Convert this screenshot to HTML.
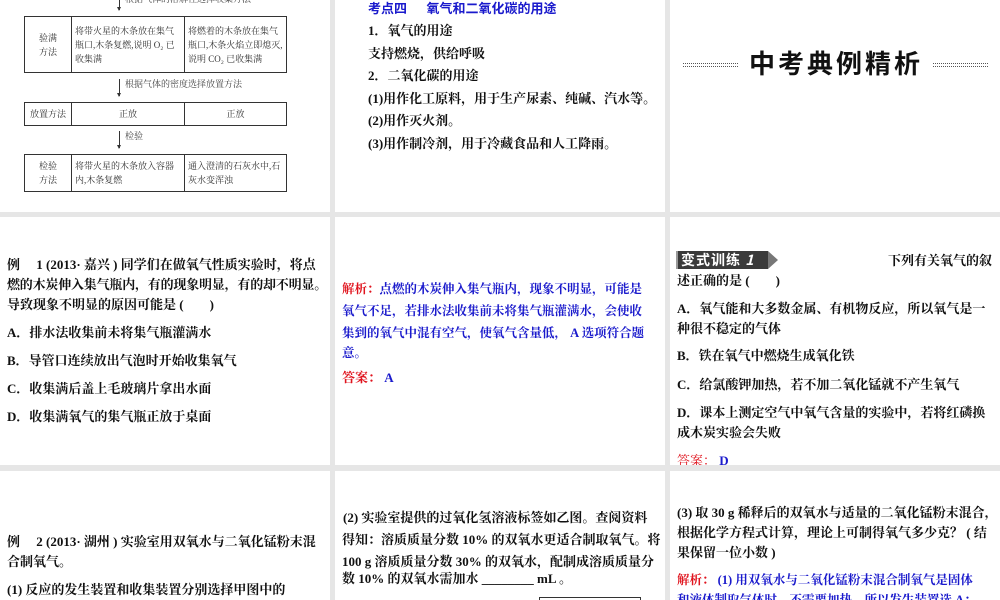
<!DOCTYPE html>
<html><head><meta charset="utf-8"><style>
*{margin:0;padding:0;box-sizing:border-box}
body{width:1000px;height:600px;background:#e6e6e6;position:relative;overflow:hidden;font-family:"Liberation Serif","Noto Serif CJK SC","Noto Sans CJK SC",serif;color:#111}
.p{position:absolute;background:#fff;overflow:hidden}
.t{position:absolute;white-space:nowrap;font-size:13px;line-height:16px}
.s{font-family:"Liberation Serif","Noto Sans CJK SC",sans-serif}
.b{font-weight:bold}
.blue{color:#1a1acc}.red{color:#e0141e}
table{position:absolute;border-collapse:collapse;font-size:9px;color:#333;font-family:"Liberation Serif","Noto Serif CJK SC",serif}
td{border:1px solid #333;padding:2px 3px;line-height:14px;vertical-align:middle}
.arr{position:absolute;width:1px;background:#333}
.arr:after{content:"";position:absolute;left:-2px;bottom:-1px;border-left:2.5px solid transparent;border-right:2.5px solid transparent;border-top:4px solid #333}
.dot{position:absolute;height:4px;border-top:1px dotted #555;border-bottom:1px dotted #555}
</style></head><body>

<div class="p" style="left:0;top:0;width:330px;height:212px">
<div class="arr" style="left:119px;top:0;height:10px"></div>
<div class="t" style="left:125px;top:-9px;font-size:9px;color:#444">根据气体的溶解性选择收集方法</div>
<table style="left:24px;top:16px;width:263px;height:57px">
<tr><td style="width:47px;text-align:center">验满<br>方法</td><td style="width:113px">将带火星的木条放在集气瓶口,木条复燃,说明 O₂ 已收集满</td><td>将燃着的木条放在集气瓶口,木条火焰立即熄灭,说明 CO₂ 已收集满</td></tr></table>
<div class="arr" style="left:119px;top:79px;height:17px"></div>
<div class="t" style="left:125px;top:76px;font-size:9px;color:#444">根据气体的密度选择放置方法</div>
<table style="left:24px;top:102px;width:263px;height:24px">
<tr><td style="width:47px;text-align:center">放置方法</td><td style="width:113px;text-align:center">正放</td><td style="text-align:center">正放</td></tr></table>
<div class="arr" style="left:119px;top:131px;height:17px"></div>
<div class="t" style="left:125px;top:128px;font-size:9px;color:#444">检验</div>
<table style="left:24px;top:154px;width:263px;height:38px">
<tr><td style="width:47px;text-align:center">检验<br>方法</td><td style="width:113px">将带火星的木条放入容器内,木条复燃</td><td>通入澄清的石灰水中,石灰水变浑浊</td></tr></table>
</div>

<div class="p" style="left:335px;top:0;width:330px;height:212px">
<div class="t s b blue" style="left:33px;top:1px;font-size:13px">考点四&nbsp;&nbsp;&nbsp;&nbsp;&nbsp;&nbsp;氧气和二氧化碳的用途</div>
<div class="t b" style="left:33px;top:23px;font-size:13px">1．氧气的用途</div>
<div class="t b" style="left:33px;top:46px;font-size:13px">支持燃烧，供给呼吸</div>
<div class="t b" style="left:33px;top:68px;font-size:13px">2．二氧化碳的用途</div>
<div class="t b" style="left:33px;top:91px;font-size:13px">(1)用作化工原料，用于生产尿素、纯碱、汽水等。</div>
<div class="t b" style="left:33px;top:113px;font-size:13px">(2)用作灭火剂。</div>
<div class="t b" style="left:33px;top:136px;font-size:13px">(3)用作制冷剂，用于冷藏食品和人工降雨。</div>
</div>

<div class="p" style="left:670px;top:0;width:330px;height:212px">
<div class="dot" style="left:13px;top:63px;width:55px"></div>
<div class="t s b" style="left:79px;top:48px;font-size:26px;line-height:30px;letter-spacing:3px;font-family:'Noto Sans CJK SC',sans-serif">中考典例精析</div>
<div class="dot" style="left:263px;top:63px;width:55px"></div>
</div>

<div class="p" style="left:0;top:217px;width:330px;height:248px">
<div class="t b" style="left:7px;top:40px">例&nbsp;&nbsp;&nbsp;&nbsp; 1 (2013· 嘉兴 ) 同学们在做氧气性质实验时，将点</div>
<div class="t b" style="left:7px;top:60px;letter-spacing:-0.2px">燃的木炭伸入集气瓶内，有的现象明显，有的却不明显。</div>
<div class="t b" style="left:7px;top:80px">导致现象不明显的原因可能是 (&nbsp;&nbsp;&nbsp;&nbsp;&nbsp;&nbsp;&nbsp; )</div>
<div class="t b" style="left:7px;top:108px">A．排水法收集前未将集气瓶灌满水</div>
<div class="t b" style="left:7px;top:136px">B．导管口连续放出气泡时开始收集氧气</div>
<div class="t b" style="left:7px;top:164px">C．收集满后盖上毛玻璃片拿出水面</div>
<div class="t b" style="left:7px;top:192px">D．收集满氧气的集气瓶正放于桌面</div>
</div>

<div class="p" style="left:335px;top:217px;width:330px;height:248px">
<div class="t b" style="left:7px;top:64px;font-size:12.5px"><span class="red">解析：</span><span class="blue">点燃的木炭伸入集气瓶内，现象不明显，可能是</span></div>
<div class="t b blue" style="left:7px;top:86px;font-size:12.5px">氧气不足，若排水法收集前未将集气瓶灌满水，会使收</div>
<div class="t b blue" style="left:7px;top:108px;font-size:12.5px">集到的氧气中混有空气，使氧气含量低， A 选项符合题</div>
<div class="t b blue" style="left:7px;top:128px;font-size:12.5px">意。</div>
<div class="t b" style="left:7px;top:153px"><span class="red">答案：</span> <span class="blue">A</span></div>
</div>

<div class="p" style="left:670px;top:217px;width:330px;height:248px">
<div style="position:absolute;left:6px;top:34px;width:92px;height:18px;background:#3a3a3a;border-left:2px solid #999"></div>
<div style="position:absolute;left:98px;top:34px;border-top:9px solid transparent;border-bottom:9px solid transparent;border-left:10px solid #777"></div>
<div class="t s b" style="left:11px;top:35px;color:#fff;font-size:14px;font-family:'Noto Sans CJK SC',sans-serif;letter-spacing:1px">变式训练 <i>1</i></div>
<div class="t b" style="left:218px;top:36px">下列有关氧气的叙</div>
<div class="t b" style="left:7px;top:56px">述正确的是 (&nbsp;&nbsp;&nbsp;&nbsp;&nbsp;&nbsp;&nbsp; )</div>
<div class="t b" style="left:7px;top:84px">A．氧气能和大多数金属、有机物反应，所以氧气是一</div>
<div class="t b" style="left:7px;top:104px">种很不稳定的气体</div>
<div class="t b" style="left:7px;top:131px">B．铁在氧气中燃烧生成氧化铁</div>
<div class="t b" style="left:7px;top:160px">C．给氯酸钾加热，若不加二氧化锰就不产生氧气</div>
<div class="t b" style="left:7px;top:188px">D．课本上测定空气中氧气含量的实验中，若将红磷换</div>
<div class="t b" style="left:7px;top:208px">成木炭实验会失败</div>
<div class="t b" style="left:7px;top:236px"><span class="red" style="font-weight:normal">答案：</span> <span class="blue">D</span></div>
</div>

<div class="p" style="left:0;top:471px;width:330px;height:129px">
<div class="t b" style="left:7px;top:63px">例&nbsp;&nbsp;&nbsp;&nbsp; 2 (2013· 湖州 ) 实验室用双氧水与二氧化锰粉末混</div>
<div class="t b" style="left:7px;top:83px">合制氧气。</div>
<div class="t b" style="left:7px;top:111px">(1) 反应的发生装置和收集装置分别选择甲图中的</div>
</div>

<div class="p" style="left:335px;top:471px;width:330px;height:129px">
<div class="t b" style="left:8px;top:39px">(2) 实验室提供的过氧化氢溶液标签如乙图。查阅资料</div>
<div class="t b" style="left:7px;top:61px">得知：溶质质量分数 10% 的双氧水更适合制取氧气。将</div>
<div class="t b" style="left:7px;top:83px">100 g 溶质质量分数 30% 的双氧水，配制成溶质质量分</div>
<div class="t b" style="left:7px;top:100px">数 10% 的双氧水需加水 ________ mL 。</div>
<div style="position:absolute;left:204px;top:126px;width:102px;height:10px;border:1px solid #333"></div>
</div>

<div class="p" style="left:670px;top:471px;width:330px;height:129px">
<div class="t b" style="left:7px;top:34px">(3) 取 30 g 稀释后的双氧水与适量的二氧化锰粉末混合，</div>
<div class="t b" style="left:7px;top:54px">根据化学方程式计算，理论上可制得氧气多少克？ ( 结</div>
<div class="t b" style="left:7px;top:74px">果保留一位小数 )</div>
<div class="t b" style="left:7px;top:101px;font-size:12.5px"><span class="red">解析：</span><span class="blue"> (1) 用双氧水与二氧化锰粉末混合制氧气是固体</span></div>
<div class="t b blue" style="left:7px;top:121px;font-size:12.5px">和液体制取气体时，不需要加热，所以发生装置选 A；</div>
</div>
</body></html>
